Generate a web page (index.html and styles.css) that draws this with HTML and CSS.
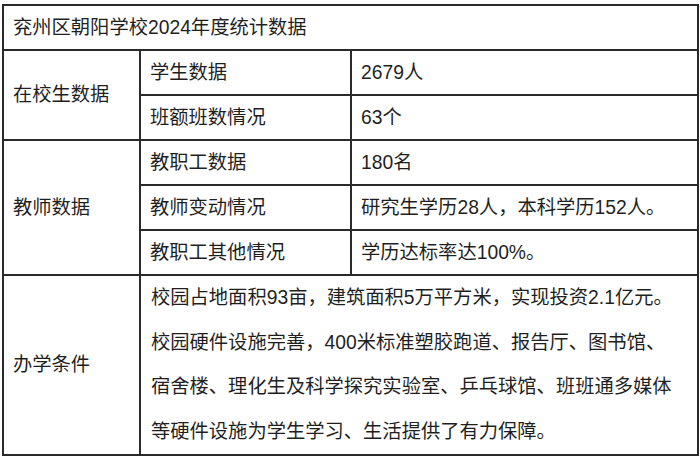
FILE: index.html
```html
<!DOCTYPE html>
<html lang="zh-CN">
<head>
<meta charset="utf-8">
<title>兖州区朝阳学校2024年度统计数据</title>
<link rel="stylesheet" href="styles.css">
</head>
<body>
<table class="stats">
  <colgroup>
    <col class="c1">
    <col class="c2">
    <col class="c3">
  </colgroup>
  <tr class="row">
    <td colspan="3">兖州区朝阳学校2024年度统计数据</td>
  </tr>
  <tr class="row">
    <td rowspan="2">在校生数据</td>
    <td>学生数据</td>
    <td>2679人</td>
  </tr>
  <tr class="row">
    <td>班额班数情况</td>
    <td>63个</td>
  </tr>
  <tr class="row">
    <td rowspan="3">教师数据</td>
    <td>教职工数据</td>
    <td>180名</td>
  </tr>
  <tr class="row">
    <td>教师变动情况</td>
    <td>研究生学历28人，本科学历152人。</td>
  </tr>
  <tr class="row">
    <td>教职工其他情况</td>
    <td>学历达标率达100%。</td>
  </tr>
  <tr class="row-long">
    <td>办学条件</td>
    <td colspan="2" class="long">校园占地面积93亩，建筑面积5万平方米，实现投资2.1亿元。<br>校园硬件设施完善，400米标准塑胶跑道、报告厅、图书馆、<br>宿舍楼、理化生及科学探究实验室、乒乓球馆、班班通多媒体<br>等硬件设施为学生学习、生活提供了有力保障。</td>
  </tr>
</table>
</body>
</html>
```

FILE: styles.css
```css
html, body {
  margin: 0;
  padding: 0;
  background: #ffffff;
}
body {
  padding: 4px 0 0 2px;
  font-family: "Liberation Sans", "Noto Sans CJK SC", sans-serif;
  font-size: 19.3px;
  color: #1f1f1f;
}
.stats {
  border-collapse: collapse;
  table-layout: fixed;
  width: 695px;
}
.c1 { width: 137px; }
.c2 { width: 211px; }
.c3 { width: 347px; }
.stats td {
  border: 2px solid #2a2a2a;
  padding: 0 9px;
  vertical-align: middle;
  white-space: nowrap;
  line-height: 24px;
}
.row td {
  height: 43px;
}
.row-long td {
  height: 176px;
}
.stats td.long {
  line-height: 44.5px;
  padding-left: 10px;
}
```
